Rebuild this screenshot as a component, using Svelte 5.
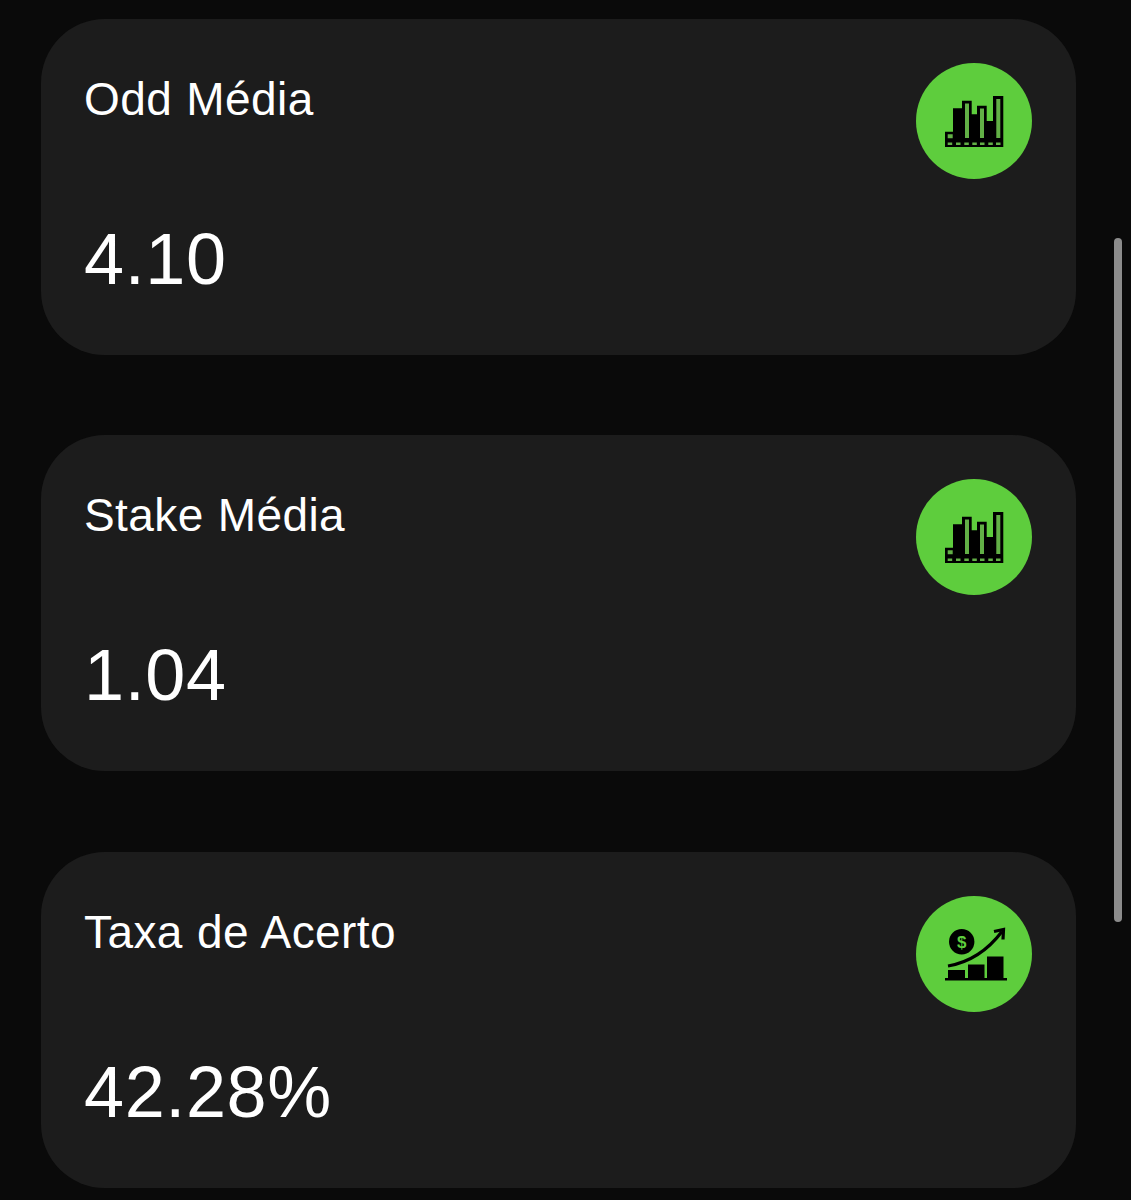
<script>
	const stats = [
		{ label: 'Odd Média', value: '4.10', icon: 'bars' },
		{ label: 'Stake Média', value: '1.04', icon: 'bars' },
		{ label: 'Taxa de Acerto', value: '42.28%', icon: 'growth' }
	];

	// gaps in the bottom row of the bar chart icon
	const dashes = [31.7, 40, 48.3, 56.3, 64, 72.3, 80];
</script>

<main class="page">
	{#each stats as stat}
		<section class="card">
			<div class="card-top">
				<h3 class="label">{stat.label}</h3>
				<div class="badge">
					{#if stat.icon === 'bars'}
						<svg viewBox="0 0 116 116" width="116" height="116" aria-hidden="true">
							<path class="ink" d="M29 68.700h8V78H29zM37 45.300h10V78H37zM46 37.700h9.700V78H46zM55 51.300h7V78h-7zM61 42.700h9.700V78H61zM70 58h8v20h-8zM77 33h10.300v45H77zM29 77h58.300v7H29z" />
							<path class="slit" d="M31.700 71.300h5v4h-5zM49 40.500h4V75h-4zM64 45.500h4V75h-4zM80.300 36h4V75h-4z" />
							{#each dashes as x}
								<rect class="slit" {x} y="79.500" width="4.500" height="2.500" />
							{/each}
						</svg>
					{:else}
						<svg viewBox="0 0 116 116" width="116" height="116" aria-hidden="true">
							<circle class="ink" cx="45.700" cy="45.700" r="12.700" />
							<text class="dollar" x="45.700" y="51.500">$</text>
							<path class="arrow" d="M32 70C55 66 72 54 86 35.500" />
							<path class="arrow" d="M78 35.500 87.500 33.500 87 43.500" />
							<path class="ink" d="M32 74h17v8.500H32zM52 68.500h16.500v14H52zM71 60.500h16.500v22H71zM29 82h62v2.500H29z" />
						</svg>
					{/if}
				</div>
			</div>
			<p class="value">{stat.value}</p>
		</section>
	{/each}
	<div class="scrollbar"></div>
</main>

<style>
	:global(body) {
		background: #0a0a0a;
	}

	.page {
		position: relative;
		height: 1200px;
		box-sizing: border-box;
		padding: 19px 55px 0 41px;
		display: flex;
		flex-direction: column;
		gap: 80.25px;
		overflow: hidden;
		font-family: "Liberation Sans", Arial, sans-serif;
		color: #fff;
	}

	.card {
		height: 336px;
		flex-shrink: 0;
		box-sizing: border-box;
		padding: 44px 44px 44px 43px;
		background: #1c1c1c;
		border-radius: 64px;
	}

	.card-top {
		display: flex;
		justify-content: space-between;
		align-items: flex-start;
	}

	.label {
		margin: 9px 0 0;
		font-size: 46px;
		line-height: 54px;
		font-weight: 400;
		letter-spacing: 0.4px;
		word-spacing: 1px;
	}

	.badge {
		width: 116px;
		height: 116px;
		border-radius: 50%;
		background: #5ecd3d;
	}

	.badge svg {
		display: block;
	}

	.ink {
		fill: #000;
	}

	.slit {
		fill: #62b046;
	}

	.arrow {
		fill: none;
		stroke: #000;
		stroke-width: 3.2;
	}

	.dollar {
		fill: #5ecd3d;
		font-size: 17px;
		font-weight: 700;
		text-anchor: middle;
	}

	.value {
		margin: 38px 0 0;
		font-size: 72px;
		line-height: 84px;
		font-weight: 400;
		font-kerning: none;
		letter-spacing: 0.6px;
	}

	/* overlay scrollbar */
	.scrollbar {
		position: absolute;
		left: 1114px;
		top: 238px;
		width: 8px;
		height: 684px;
		border-radius: 4px;
		background: #8c8c8c;
	}
</style>
